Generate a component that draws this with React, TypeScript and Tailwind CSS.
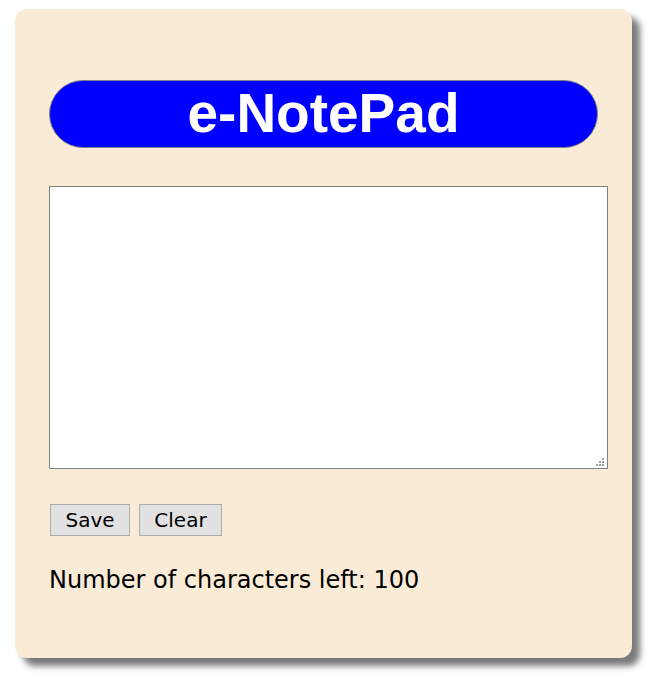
export default function App() {
  return (
    <div className="min-h-[680px] bg-white pt-[9px] pl-[15px]">
      <div className="w-[617px] h-[649px] rounded-[12px] bg-[#faebd7] px-[34px] shadow-[8px_8px_6px_#7a7a7a]">
        <div className="pt-[71px]">
          <h1 className="w-[549px] h-[68px] rounded-full border border-[#808080] bg-[#0000ff] text-white text-center font-bold text-[55px] leading-[64px] font-['Liberation_Sans',Arial,sans-serif]">
            e-NotePad
          </h1>
        </div>
        {/* note area */}
        <div className="relative mt-[38px] w-[559px] h-[283px]">
          <textarea className="block w-full h-full border border-[#808080] bg-white resize-none outline-none"></textarea>
          <div className="absolute right-[4px] bottom-[3px] flex flex-col items-end gap-px">
            <span className="w-[2px] h-[2px] bg-[#a0a0a0]"></span>
            <span className="flex gap-px">
              <span className="w-[2px] h-[2px] bg-[#a0a0a0]"></span>
              <span className="w-[2px] h-[2px] bg-[#a0a0a0]"></span>
            </span>
            <span className="flex gap-px">
              <span className="w-[2px] h-[2px] bg-[#a0a0a0]"></span>
              <span className="w-[2px] h-[2px] bg-[#a0a0a0]"></span>
              <span className="w-[2px] h-[2px] bg-[#a0a0a0]"></span>
            </span>
          </div>
        </div>
        <div className="mt-[35px] flex gap-[9px] pl-px font-['DejaVu_Sans',Tahoma,sans-serif] text-[20px] text-black">
          <button className="w-[80px] h-[32px] bg-[#e1e1e1] border border-[#adadad]">Save</button>
          <button className="w-[83px] h-[32px] bg-[#e1e1e1] border border-[#adadad]">Clear</button>
        </div>
        <p className="mt-[27px] text-[24px] leading-[34px] text-black font-['DejaVu_Sans',Tahoma,sans-serif]">
          Number of characters left: 100
        </p>
      </div>
    </div>
  );
}
